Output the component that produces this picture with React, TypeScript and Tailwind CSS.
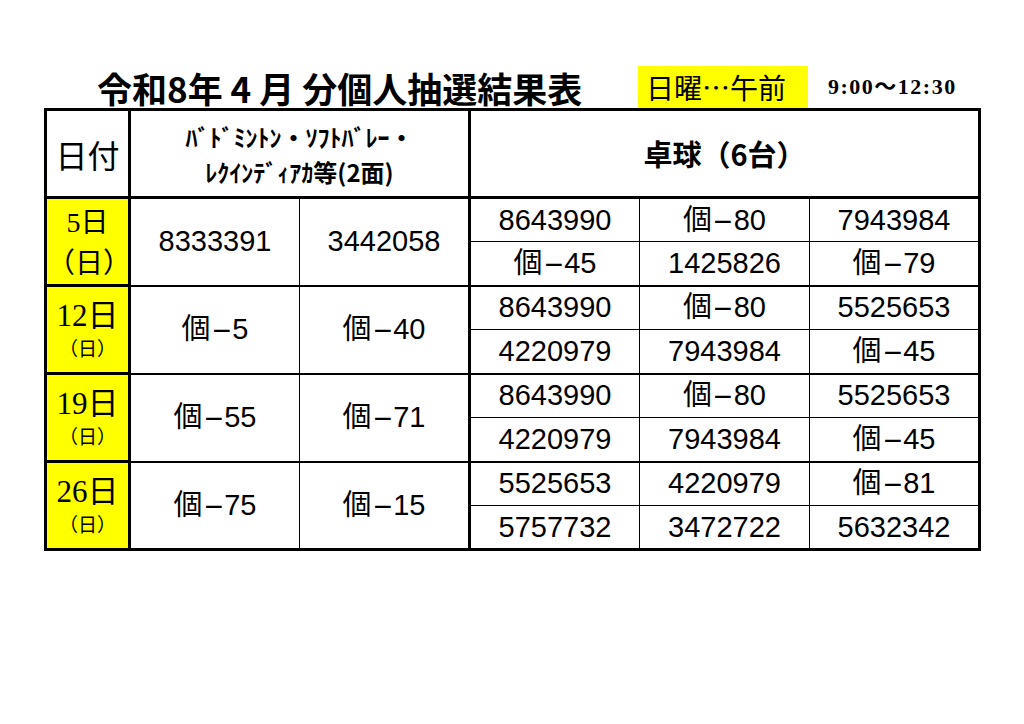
import React from "react";

const cellFont = "font-['Liberation_Sans','Noto_Sans_CJK_JP',sans-serif]";

function Ko({ n }: { n: string }) {
  return (
    <span>
      個<span className="inline-block scale-x-[2.2] mx-[6px]">-</span>
      {n}
    </span>
  );
}

function V({ v }: { v: string }) {
  if (v.startsWith("個-")) return <Ko n={v.slice(2)} />;
  return <>{v}</>;
}

type Row = {
  day: string;
  big: boolean;
  a: string;
  b: string;
  t1: string[];
  t2: string[];
};

const rows: Row[] = [
  { day: "5", big: true, a: "8333391", b: "3442058", t1: ["8643990", "個-80", "7943984"], t2: ["個-45", "1425826", "個-79"] },
  { day: "12", big: false, a: "個-5", b: "個-40", t1: ["8643990", "個-80", "5525653"], t2: ["4220979", "7943984", "個-45"] },
  { day: "19", big: false, a: "個-55", b: "個-71", t1: ["8643990", "個-80", "5525653"], t2: ["4220979", "7943984", "個-45"] },
  { day: "26", big: false, a: "個-75", b: "個-15", t1: ["5525653", "4220979", "個-81"], t2: ["5757732", "3472722", "5632342"] },
];

export default function App() {
  return (
    <div className="w-[1024px] h-[724px] bg-white text-black pl-[44px] pt-[66px] font-['Noto_Sans_CJK_JP',sans-serif]">
      <div className="flex w-[934px] h-[42px] items-center">
        <div className="w-[594px] pl-[53px] text-[35px] font-bold leading-none whitespace-nowrap">
          令和8年 4 月 分個人抽選結果表
        </div>
        <div className="w-[170px] h-[42px] bg-[#ffff00] flex items-center pl-[8px] text-[28px] leading-none">
          日曜…午前
        </div>
        <div className="pl-[20px] text-[22px] tracking-[1.5px] font-bold leading-none font-['Liberation_Serif','Noto_Sans_CJK_JP',serif] whitespace-nowrap">
          9:00～12:30
        </div>
      </div>
      <table className={`border-collapse table-fixed w-[934px] border-[3px] border-black ${cellFont}`}>
        <colgroup>
          <col className="w-[84px]" />
          <col className="w-[170px]" />
          <col className="w-[170px]" />
          <col className="w-[170px]" />
          <col className="w-[170px]" />
          <col className="w-[170px]" />
        </colgroup>
        <tbody>
          <tr className="h-[88px]">
            <td className="border-[3px] border-black text-center text-[32px] font-['Noto_Sans_CJK_JP',sans-serif]">日付</td>
            <td colSpan={2} className="border-[3px] border-black text-center text-[24px] font-bold leading-[35px] font-['Noto_Sans_CJK_JP',sans-serif]">
              <div>ﾊﾞﾄﾞﾐﾝﾄﾝ・ｿﾌﾄﾊﾞﾚｰ・</div>
              <div>ﾚｸｲﾝﾃﾞｨｱｶ等(2面)</div>
            </td>
            <td colSpan={3} className="border-[3px] border-black text-center text-[29px] font-bold font-['Noto_Sans_CJK_JP',sans-serif]">
              卓球（6台）
            </td>
          </tr>
          {rows.map((r) => (
            <React.Fragment key={r.day}>
              <tr className="h-[44px]">
                <td rowSpan={2} className="border-[3px] border-black bg-[#ffff00] text-center p-0 font-['Liberation_Serif','Noto_Sans_CJK_JP',serif]">
                  {r.big ? (
                    <div className="text-[28px] leading-[38px]">
                      <div>{r.day}日</div>
                      <div className="font-['Noto_Sans_CJK_JP',sans-serif]">（日）</div>
                    </div>
                  ) : (
                    <div>
                      <div className="text-[31px] leading-[36px]">{r.day}日</div>
                      <div className="text-[19px] leading-[28px] font-['Noto_Sans_CJK_JP',sans-serif]">（日）</div>
                    </div>
                  )}
                </td>
                <td rowSpan={2} className="border border-black border-b-2 text-center text-[29px] leading-none p-0">
                  <V v={r.a} />
                </td>
                <td rowSpan={2} className="border border-black border-r-[3px] border-b-2 text-center text-[29px] leading-none p-0">
                  <V v={r.b} />
                </td>
                {r.t1.map((v, i) => (
                  <td key={i} className="border border-black text-center text-[29px] leading-none p-0">
                    <V v={v} />
                  </td>
                ))}
              </tr>
              <tr className="h-[44px]">
                {r.t2.map((v, i) => (
                  <td key={i} className="border border-black border-b-2 text-center text-[29px] leading-none p-0">
                    <V v={v} />
                  </td>
                ))}
              </tr>
            </React.Fragment>
          ))}
        </tbody>
      </table>
    </div>
  );
}
